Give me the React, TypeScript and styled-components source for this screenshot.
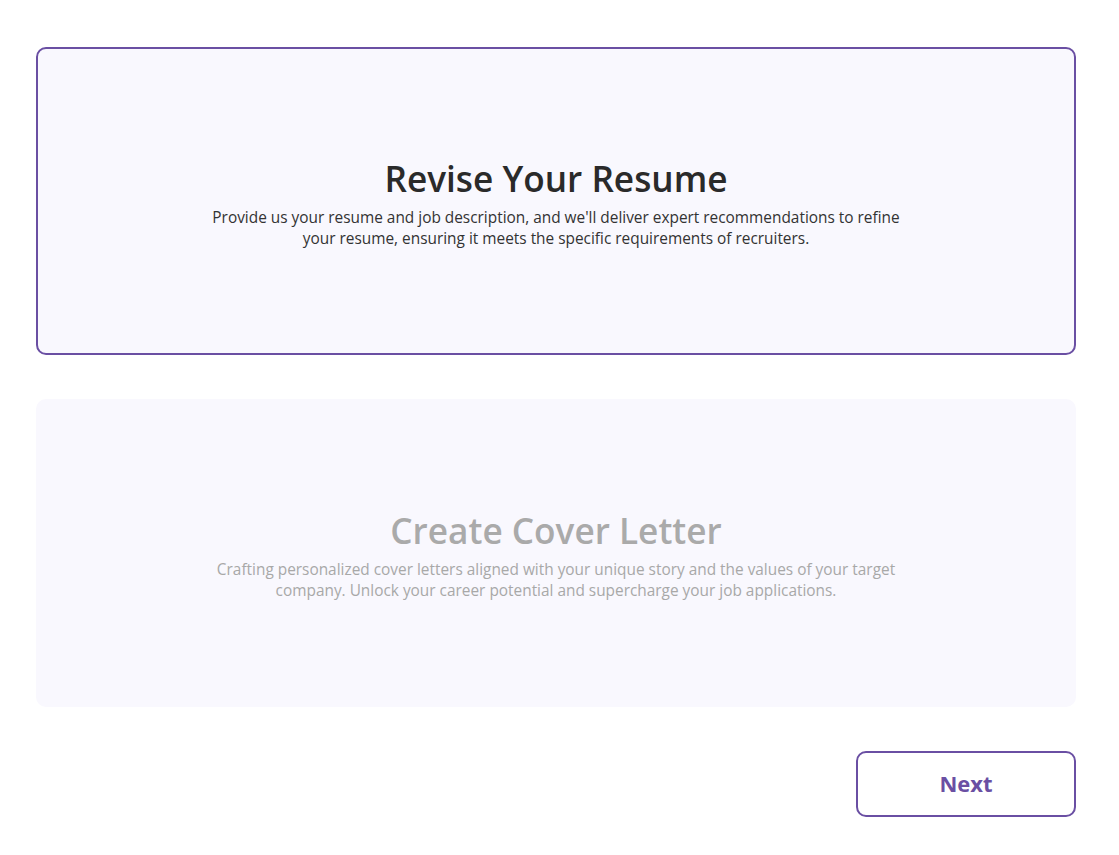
import React, { useState } from "react";
import styled, { createGlobalStyle } from "styled-components";

const Global = createGlobalStyle`
  html, body { margin: 0; padding: 0; background: #ffffff; }
  body { font-family: "Open Sans", "Noto Sans", sans-serif; }
  * { box-sizing: border-box; }
`;

const Page = styled.div`
  padding: 47px 43px 38px 36px;
  display: flex;
  flex-direction: column;
  gap: 44px;
`;

const Card = styled.button<{ $active: boolean }>`
  all: unset;
  box-sizing: border-box;
  height: 308px;
  border-radius: 10px;
  background: #f9f8fe;
  border: 2px solid ${(p) => (p.$active ? "#6a4fa3" : "transparent")};
  display: flex;
  flex-direction: column;
  align-items: center;
  justify-content: center;
  text-align: center;
  cursor: pointer;
  padding-top: 2px;
`;

const Title = styled.h2<{ $active: boolean }>`
  margin: 0 0 6px;
  font-size: 35.2px;
  font-weight: 600;
  line-height: 46px;
  color: ${(p) => (p.$active ? "#2a2a2a" : "#aaaaaa")};
`;

const Desc = styled.p<{ $active: boolean }>`
  margin: 0;
  max-width: 710px;
  font-size: 15.4px;
  line-height: 21px;
  color: ${(p) => (p.$active ? "#333333" : "#a8a8a8")};
`;

const Footer = styled.div`
  display: flex;
  justify-content: flex-end;
`;

const NextButton = styled.button`
  width: 220px;
  height: 66px;
  border: 2px solid #6a4fa3;
  border-radius: 10px;
  background: #ffffff;
  color: #6a4fa3;
  font-family: "Open Sans", "Noto Sans", sans-serif;
  font-size: 22px;
  font-weight: 700;
  cursor: pointer;
  padding: 0 0 2px;
`;

const options = [
  {
    title: "Revise Your Resume",
    desc: "Provide us your resume and job description, and we'll deliver expert recommendations to refine your resume, ensuring it meets the specific requirements of recruiters.",
  },
  {
    title: "Create Cover Letter",
    desc: "Crafting personalized cover letters aligned with your unique story and the values of your target company. Unlock your career potential and supercharge your job applications.",
  },
];

export default function App() {
  const [selected, setSelected] = useState(0);
  return (
    <>
      <Global />
      <Page>
        {options.map((o, i) => (
          <Card key={o.title} $active={selected === i} onClick={() => setSelected(i)}>
            <Title $active={selected === i}>{o.title}</Title>
            <Desc $active={selected === i}>{o.desc}</Desc>
          </Card>
        ))}
        <Footer>
          <NextButton>Next</NextButton>
        </Footer>
      </Page>
    </>
  );
}
